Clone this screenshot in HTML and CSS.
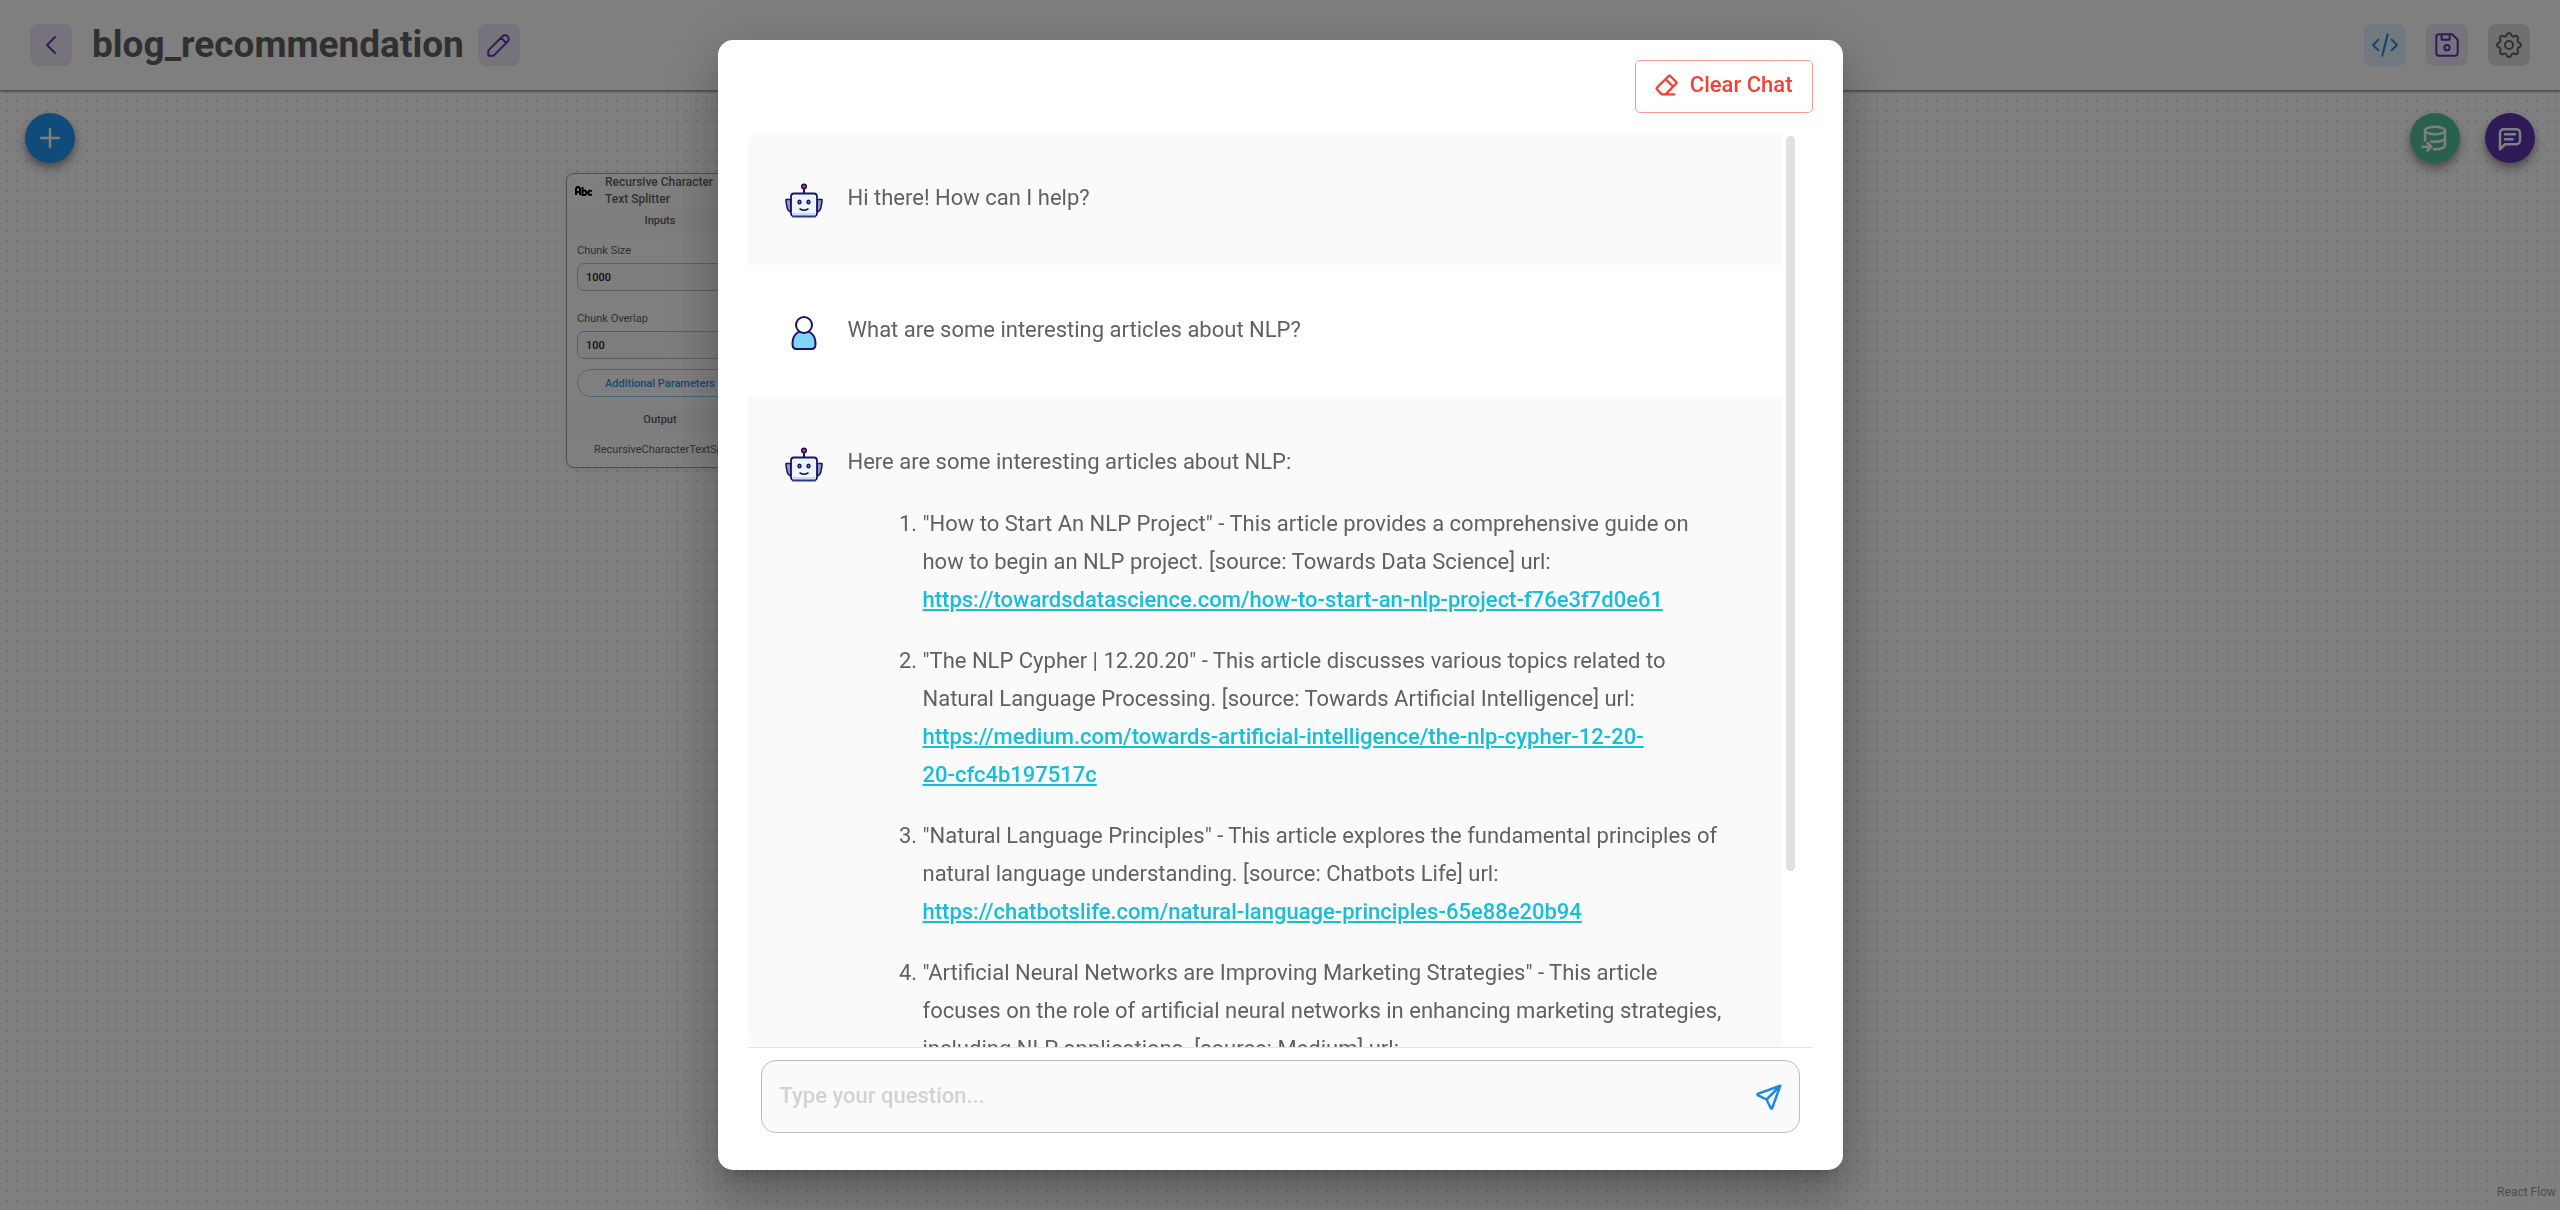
FILE: index.html
```html
<!DOCTYPE html>
<html lang="en">
<head>
<meta charset="utf-8">
<meta name="viewport" content="width=device-width, initial-scale=1">
<title>blog_recommendation</title>
<link rel="stylesheet" href="styles.css">
</head>
<body>
<svg class="sprite" aria-hidden="true">
  <symbol id="bot" viewBox="0 0 38 38">
    <path d="M1 17.500h5v12h-1.500l-2-2.500-1.500-7z" fill="#8f9cc0" stroke="#1b1464" stroke-width="1.500" stroke-linejoin="round"/>
    <path d="M37 17.500h-5v12h1.500l2-2.500 1.500-7z" fill="#8f9cc0" stroke="#1b1464" stroke-width="1.500" stroke-linejoin="round"/>
    <path d="M19 6v6" stroke="#1b1464" stroke-width="2"/>
    <circle cx="19" cy="4.500" r="2.300" fill="#f0264c" stroke="#1b1464" stroke-width="1.500"/>
    <rect x="6" y="11.500" width="26" height="22.500" rx="3" fill="#eef4ff" stroke="#1b1464" stroke-width="1.800"/>
    <path d="M7 31h24v1q0 2-3 2h-18q-3 0-3-2z" fill="#c9dcf2"/>
    <path d="M8 34.500h22" stroke="#2c3a8c" stroke-width="2" stroke-linecap="round"/>
    <ellipse cx="14.500" cy="20" rx="1.500" ry="1.800" fill="#5d78c8" stroke="#1b1464" stroke-width="1.400"/>
    <ellipse cx="23.500" cy="20" rx="1.500" ry="1.800" fill="#5d78c8" stroke="#1b1464" stroke-width="1.400"/>
    <path d="M15 27q4 2.500 8 0" fill="none" stroke="#1b1464" stroke-width="1.500" stroke-linecap="round"/>
  </symbol>
  <symbol id="gear" viewBox="0 0 24 24"><path d="M10.325 4.317c.426-1.756 2.924-1.756 3.350 0a1.724 1.724 0 0 0 2.573 1.066c1.543-.94 3.310.826 2.370 2.370a1.724 1.724 0 0 0 1.065 2.572c1.756.426 1.756 2.924 0 3.350a1.724 1.724 0 0 0-1.066 2.573c.94 1.543-.826 3.310-2.370 2.370a1.724 1.724 0 0 0-2.572 1.065c-.426 1.756-2.924 1.756-3.350 0a1.724 1.724 0 0 0-2.573-1.066c-1.543.94-3.310-.826-2.370-2.370a1.724 1.724 0 0 0-1.065-2.572c-1.756-.426-1.756-2.924 0-3.350a1.724 1.724 0 0 0 1.066-2.573c-.94-1.543.826-3.310 2.370-2.370c1 .608 2.296.07 2.572-1.065z"/><circle cx="12" cy="12" r="3"/></symbol>
</svg>

<div class="app">
  <header class="topbar">
    <button class="tool tool-purple" type="button" aria-label="Back"><svg class="icon" viewBox="0 0 24 24"><path d="M15 6l-6 6l6 6"/></svg></button>
    <h1 class="title">blog_recommendation</h1>
    <button class="tool tool-purple" type="button" aria-label="Rename"><svg class="icon" viewBox="0 0 24 24"><path d="M4 20h4l10.500-10.500a1.500 1.500 0 0 0-4-4l-10.500 10.500v4M13.500 6.500l4 4"/></svg></button>
    <div class="actions">
      <button class="tool tool-blue" type="button" aria-label="API endpoint"><svg class="icon" viewBox="0 0 24 24"><path d="M7 8l-4 4l4 4M17 8l4 4l-4 4M14 4l-4 16"/></svg></button>
      <button class="tool tool-purple" type="button" aria-label="Save"><svg class="icon" viewBox="0 0 24 24"><path d="M6 4h10l4 4v10a2 2 0 0 1-2 2h-12a2 2 0 0 1-2-2v-12a2 2 0 0 1 2-2M14 4v4h-6v-4"/><circle cx="12" cy="14" r="2"/></svg></button>
      <button class="tool tool-grey" type="button" aria-label="Settings"><svg class="icon"><use href="#gear"/></svg></button>
    </div>
  </header>

  <main class="canvas">
    <div class="fabs">
      <button class="fab fab-blue" type="button" aria-label="Add node"><svg class="icon icon-fab" viewBox="0 0 24 24"><path d="M12 5v14M5 12h14"/></svg></button>
      <button class="fab fab-green" type="button" aria-label="Upsert"><svg class="icon icon-fab" viewBox="0 0 24 24"><path d="M4 6c0 1.657 3.582 3 8 3s8-1.343 8-3s-3.582-3-8-3s-8 1.343-8 3M4 6v8m5.009.783c.924.14 1.933.217 2.991.217c4.418 0 8-1.343 8-3v-6M11.252 20.987c.246.009.496.013.748.013c4.418 0 8-1.343 8-3v-6M2 19h7m-3-3l3 3l-3 3"/></svg></button>
      <button class="fab fab-purple" type="button" aria-label="Chat"><svg class="icon icon-fab" viewBox="0 0 24 24"><path d="M4 21v-13a3 3 0 0 1 3-3h10a3 3 0 0 1 3 3v6a3 3 0 0 1-3 3h-9l-4 4M8 9h8M8 13h6"/></svg></button>
    </div>
    <section class="node">
      <div class="node-head">
        <svg class="abc" viewBox="0 0 18 10" aria-hidden="true"><path d="M1 9v-5.500q0-2.500 2-2.500t2 2.500v5.500M1 6h4M7.500 1v8h1.500q2.500 0 2.500-2.200t-2.500-2.300h-1M17 5.200q-3.500-1.700-3.500 1.600t3.500 1.600"/></svg>
        <h2 class="node-title">Recursive Character Text Splitter</h2>
      </div>
      <h3 class="band">Inputs</h3>
      <div class="node-body">
        <label class="label" for="size">Chunk Size</label>
        <input class="field" id="size" value="1000">
        <label class="label label-next" for="overlap">Chunk Overlap</label>
        <input class="field" id="overlap" value="100">
        <button class="params" type="button">Additional Parameters</button>
      </div>
      <h3 class="band">Output</h3>
      <p class="output">RecursiveCharacterTextSplitter</p>
    </section>
    <a class="credit" href="#">React Flow</a>
  </main>
</div>

<div class="backdrop">
  <div class="dialog" role="dialog" aria-modal="true" aria-label="Chat">
    <div class="dialog-head">
      <button class="clear" type="button"><svg class="icon icon-button" viewBox="0 0 24 24"><path d="M19 20h-10.500l-4.210-4.300a1 1 0 0 1 0-1.410l10-10a1 1 0 0 1 1.410 0l5 5a1 1 0 0 1 0 1.410l-9.200 9.300M18 13.300l-6.300-6.300"/></svg>Clear Chat</button>
    </div>
    <div class="chat">
      <div class="messages">
        <article class="message bot"><svg class="avatar"><use href="#bot"/></svg><div class="text"><p>Hi there! How can I help?</p></div></article>
        <article class="message"><svg class="avatar" viewBox="0 0 38 38"><path d="M7.500 30c0-9 5-13 11.500-13s11.500 4 11.500 13q0 5-4 5h-15q-4 0-4-5z" fill="#81d4fa" stroke="#1b1464" stroke-width="2"/><circle cx="19" cy="11" r="8" fill="#fff" stroke="#1b1464" stroke-width="2"/></svg><div class="text"><p>What are some interesting articles about NLP?</p></div></article>
        <article class="message bot"><svg class="avatar"><use href="#bot"/></svg><div class="text">
          <p>Here are some interesting articles about NLP:</p>
          <ol class="articles">
            <li>"How to Start An NLP Project" - This article provides a comprehensive guide on how to begin an NLP project. [source: Towards Data Science] url: <a href="https://towardsdatascience.com/how-to-start-an-nlp-project-f76e3f7d0e61">https://towardsdatascience.com/how-to-start-an-nlp-project-f76e3f7d0e61</a></li>
            <li>"The NLP Cypher | 12.20.20" - This article discusses various topics related to Natural Language Processing. [source: Towards Artificial Intelligence] url: <a href="https://medium.com/towards-artificial-intelligence/the-nlp-cypher-12-20-20-cfc4b197517c">https://medium.com/towards-artificial-intelligence/the-nlp-cypher-12-20-<wbr><span class="keep">20-cfc4b197517c</span></a></li>
            <li>"Natural Language Principles" - This article explores the fundamental principles of natural language understanding. [source: Chatbots Life] url: <a href="https://chatbotslife.com/natural-language-principles-65e88e20b94">https://chatbotslife.com/natural-language-principles-65e88e20b94</a></li>
            <li>"Artificial Neural Networks are Improving Marketing Strategies" - This article focuses on the role of artificial neural networks in enhancing marketing strategies, including NLP applications. [source: Medium] url:</li>
          </ol>
        </div></article>
      </div>
      <div class="thumb"></div>
    </div>
    <form class="ask">
      <input class="question" type="text" placeholder="Type your question..." aria-label="Question">
      <button class="send" type="button" aria-label="Send"><svg class="icon icon-send" viewBox="0 0 24 24"><path d="M10 14l11-11M21 3l-6.500 18a.55.55 0 0 1-1 0l-3.500-7l-7-3.500a.55.55 0 0 1 0-1l18-6.500"/></svg></button>
    </form>
  </div>
</div>
</body>
</html>
```
FILE: styles.css
```css
* { box-sizing: border-box; }
body { margin: 0; font-family: Roboto, sans-serif; color: #616161; }
button, input { font-family: inherit; }
button { cursor: pointer; }
h1, h2, h3, p { margin: 0; }
.sprite { display: none; }

.icon { width: 32px; height: 32px; fill: none; stroke: currentColor; stroke-width: 1.5; stroke-linecap: round; stroke-linejoin: round; }
.icon-fab { width: 30px; height: 30px; stroke-width: 2; }

.app { height: 100vh; display: flex; flex-direction: column; overflow: hidden; }
.topbar { height: 90px; flex: none; display: flex; align-items: center; padding: 0 30px; background: #fff; box-shadow: 0 2px 2px #9e9e9e; z-index: 1; }
.tool { width: 42px; height: 42px; flex: none; display: grid; place-items: center; padding: 0; border: 0; border-radius: 8px; }
.tool-purple { background: #ede7f6; color: #5e35b1; }
.tool-blue { background: #e3f2fd; color: #1e88e5; }
.tool-grey { background: #e0e0e0; color: #616161; }
.title { margin: 0 14px 0 20px; font-size: 37px; line-height: 44px; font-weight: 700; color: #616161; }
.actions { display: flex; gap: 20px; margin-left: auto; }

.canvas { position: relative; flex: 1; background: radial-gradient(circle at 5px 5px, #999, transparent 1px) 2px 6px / 10px 10px #fff; }
.fabs { display: flex; gap: 25px; padding: 23px 25px; }
.fab { width: 50px; height: 50px; display: grid; place-items: center; padding: 0; border: 0; border-radius: 50%; color: #fff; box-shadow: 0 4px 6px rgba(0,0,0,.25), 0 7px 14px rgba(0,0,0,.2); }
.fab-blue { background: #2196f3; margin-right: auto; }
.fab-green { background: #55c29c; }
.fab-purple { background: #5e35b1; }

.node { position: absolute; left: 566px; top: 83px; width: 188px; border: 1px solid #9e9e9e; border-radius: 8px; background: #fff; box-shadow: 0 1px 6px rgba(0,0,0,.1); overflow: hidden; }
.node-head { display: flex; align-items: center; gap: 12px; padding-left: 8px; height: 34px; }
.abc { width: 18px; height: 10px; flex: none; fill: none; stroke: #000; stroke-width: 2; }
.node-title { font-size: 12px; line-height: 17px; font-weight: 500; width: 130px; color: #616161; }
.band { height: 26px; background: #fafafa; font-size: 11px; line-height: 26px; font-weight: 500; text-align: center; color: #616161; }
.node-body { display: flex; flex-direction: column; padding: 10px; }
.label { font-size: 11px; line-height: 14px; margin-bottom: 5px; }
.label-next { margin-top: 21px; }
.field { height: 28px; padding: 0 8px; border: 1px solid #bdbdbd; border-radius: 7px; background: #fafafa; font-size: 11px; font-weight: 500; color: #212121; }
.params { height: 28px; margin-top: 10px; border: 1px solid #90caf9; border-radius: 14px; background: none; color: #2196f3; font-size: 11px; font-weight: 500; }
.output { height: 34px; padding-left: 27px; font-size: 11px; line-height: 34px; }
.credit { position: absolute; right: 0; bottom: 0; padding: 4px 4px 8px; font-size: 12px; line-height: 20px; color: #999; text-decoration: none; background: rgba(255,255,255,.5); }

.backdrop { position: fixed; inset: 0; z-index: 2; display: flex; justify-content: center; padding: 40px; background: rgba(0,0,0,.5); }
.dialog { width: 100%; max-width: 1125px; display: flex; flex-direction: column; background: #fff; border-radius: 15px; box-shadow: 0 14px 19px -9px rgba(0,0,0,.2), 0 30px 48px 4px rgba(0,0,0,.14), 0 11px 58px 10px rgba(0,0,0,.12); }
.dialog-head { display: flex; justify-content: flex-end; padding: 20px 30px; }
.clear { display: flex; align-items: center; gap: 10px; height: 53px; padding: 0 19px 3px 16px; border: 1px solid #f99b94; border-radius: 5px; background: none; color: #f44336; font-size: 22px; font-weight: 500; line-height: 38px; }
.icon-button { width: 28px; height: 28px; stroke-width: 2; }
.chat { position: relative; flex: 1; min-height: 0; display: flex; margin: 0 30px; border-bottom: 1px solid #e6e6e6; }
.messages { flex: 1; margin-right: 30px; overflow: hidden; border-radius: 12px 0 0 12px; }
.thumb { position: absolute; top: 3px; right: 18px; width: 9px; height: calc(80% + 4px); border-radius: 5px; background: #e0e0e0; }
.message { display: flex; gap: 25px; padding: 46px 37px 45px; }
.bot { background: #fafafa; }
.avatar { width: 38px; height: 38px; flex: none; margin-top: 3px; }
.text { flex: 1; font-size: 22px; line-height: 38px; }
.articles { margin: 24px 20px 0 0; padding-left: 75px; }
.articles li { margin-bottom: 23px; }
.articles a { color: #16bed7; font-weight: 500; text-decoration: underline; }
.keep { white-space: nowrap; }

.ask { display: flex; align-items: center; height: 73px; margin: 12px 43px 37px; border: 1px solid #bdbdbd; border-radius: 15px; background: #fafafa; }
.question { flex: 1; min-width: 0; padding: 0 18px 2px; border: 0; background: none; outline: 0; font-size: 22px; font-weight: 500; color: #212121; }
.question::placeholder { color: #d2d2d2; opacity: 1; }
.send { display: grid; place-items: center; width: 60px; height: 60px; padding: 0; border: 0; background: none; color: #1e88e5; }
.icon-send { width: 30px; height: 30px; stroke-width: 2; }
```
